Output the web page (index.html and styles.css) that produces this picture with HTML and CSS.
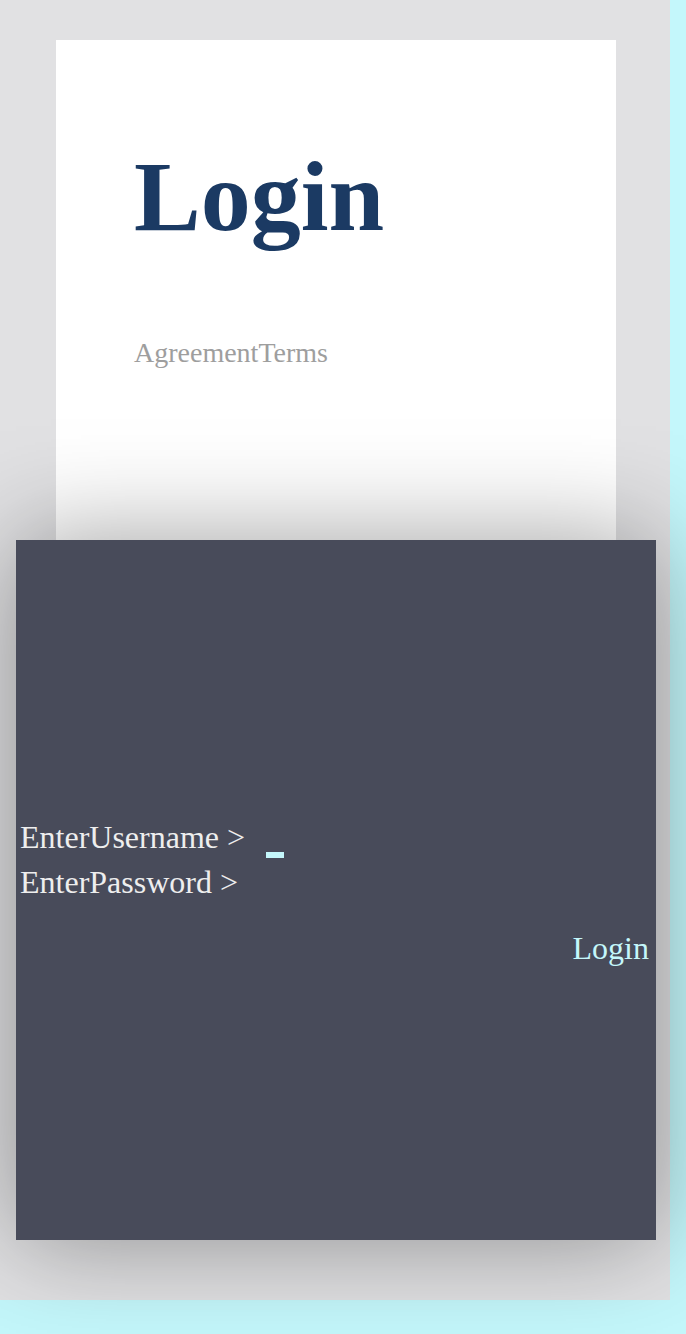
FILE: index.html
```html
<!DOCTYPE html>
<html>
<head>
<meta charset="utf-8">
<link rel="stylesheet" href="styles.css">
</head>
<body>
<div class="page">
  <div class="card">
    <h1 class="title">Login</h1>
    <div class="terms">AgreementTerms</div>
  </div>
  <div class="panel">
    <div class="row">
      <span class="label">EnterUsername &gt;</span>
      <span class="caret"></span>
    </div>
    <div class="row">
      <span class="label">EnterPassword &gt;</span>
    </div>
    <div class="actions">
      <span class="login-btn">Login</span>
    </div>
  </div>
</div>
</body>
</html>
```
FILE: styles.css
```css
html, body {
  margin: 0;
  padding: 0;
}
body {
  background: #c4f7fb;
  font-family: "Liberation Serif", "Times New Roman", serif;
  min-height: 1334px;
}
.page {
  width: 670px;
  height: 1300px;
  box-sizing: border-box;
  background: #e1e1e3;
  padding: 40px 14px 60px 16px;
}
.card {
  margin: 0 40px;
  height: 500px;
  background: #ffffff;
  box-sizing: border-box;
  padding: 107px 0 0 78px;
}
.title {
  margin: 0;
  font-size: 100px;
  line-height: 100px;
  font-weight: bold;
  color: #1b3a63;
}
.terms {
  margin-top: 92px;
  font-size: 28px;
  line-height: 28px;
  color: #9e9e9e;
}
.panel {
  position: relative;
  height: 700px;
  background: #484b5a;
  box-shadow: 0 0 100px rgba(0, 0, 0, 0.38);
  box-sizing: border-box;
  padding: 5px 7px 0 4px;
  display: flex;
  flex-direction: column;
  justify-content: center;
  color: #eeeeee;
  font-size: 32px;
}
.row {
  display: flex;
  align-items: flex-start;
  line-height: 45px;
  height: 45px;
}
.caret {
  display: block;
  width: 18px;
  height: 6px;
  background: #c4f7fb;
  margin-left: 21px;
  margin-top: 37px;
}
.actions {
  display: flex;
  justify-content: flex-end;
  margin-top: 21px;
  line-height: 45px;
}
.login-btn {
  color: #c4f7fb;
}
```
